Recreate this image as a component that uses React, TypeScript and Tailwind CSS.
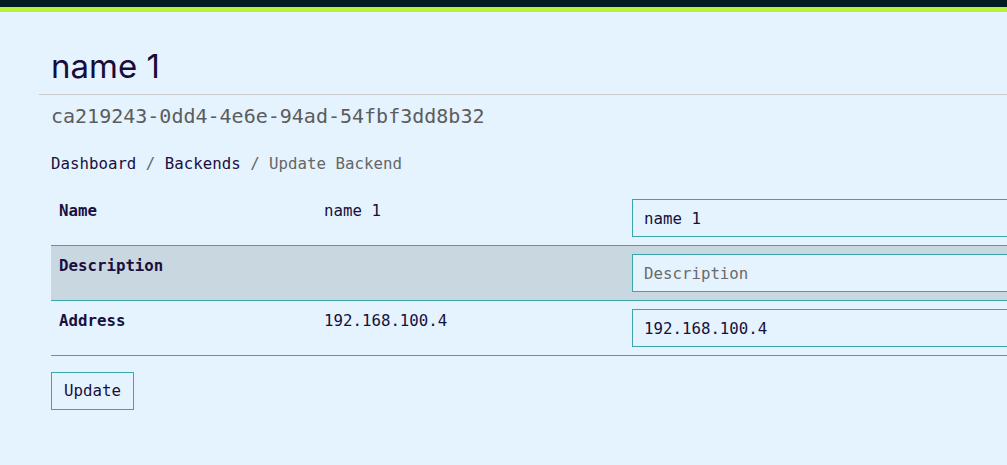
import React from "react";

const mono = `font-['DejaVu_Sans_Mono',monospace]`;

const rows = [
  { label: "Name", value: "name 1", input: "name 1", shade: false },
  { label: "Description", value: "", input: "", shade: true },
  { label: "Address", value: "192.168.100.4", input: "192.168.100.4", shade: false },
];

const App = () => {
  const textCell = `px-2 pt-[10px] pb-2 leading-5`;

  return (
    <div className="min-h-[465px] w-full overflow-hidden bg-[#e4f3fe] text-[#1a0f3d]">
      <div className="h-[7px] bg-[#021a22]" />
      <div className="h-[5px] bg-[#b8f13a]" />

      <div className="ml-[39px] pt-[36px]">
        <h1 className="px-3 font-['Inter',sans-serif] text-[33px] leading-[36px] font-normal text-[#170c3a]">
          name 1
        </h1>
        <hr className="mt-[10px] border-0 border-t border-[#cbcbcb]" />

        <div className={`px-3 ${mono}`}>
          <p className="mt-[9px] text-[20px] leading-6 text-[#5c5c5c]">
            ca219243-0dd4-4e6e-94ad-54fbf3dd8b32
          </p>

          <nav className="mt-[24px] text-[15.75px] leading-6">
            <span>Dashboard</span>
            <span className="text-[#666]"> / </span>
            <span>Backends</span>
            <span className="text-[#666]"> / </span>
            <span className="text-[#666]">Update Backend</span>
          </nav>

          <div className="mt-[15px] w-[1100px] text-[15.75px]">
            {rows.map((row) => (
              <div
                key={row.label}
                className={`grid grid-cols-[265px_308px_1fr] border-b border-[#3aa5ac] ${
                  row.shade ? "bg-[#c9d7e1]" : ""
                }`}
              >
                <div className={`${textCell} font-bold`}>{row.label}</div>
                <div className={textCell}>{row.value}</div>
                <div className="px-2 py-2">
                  <input
                    defaultValue={row.input}
                    placeholder={row.label}
                    className={`block h-[38px] w-full border border-[#3aa5ac] bg-[#e4f3fe] pl-[11px] ${mono} text-[15.75px] text-[#1a0f3d] outline-none placeholder:text-[#6a6a6a]`}
                  />
                </div>
              </div>
            ))}
          </div>

          <button
            className={`mt-4 h-[38px] border border-[#3aa5ac] px-3 ${mono} text-[15.75px] text-[#1a0f3d]`}
          >
            Update
          </button>
        </div>
      </div>
    </div>
  );
};

export default App;
